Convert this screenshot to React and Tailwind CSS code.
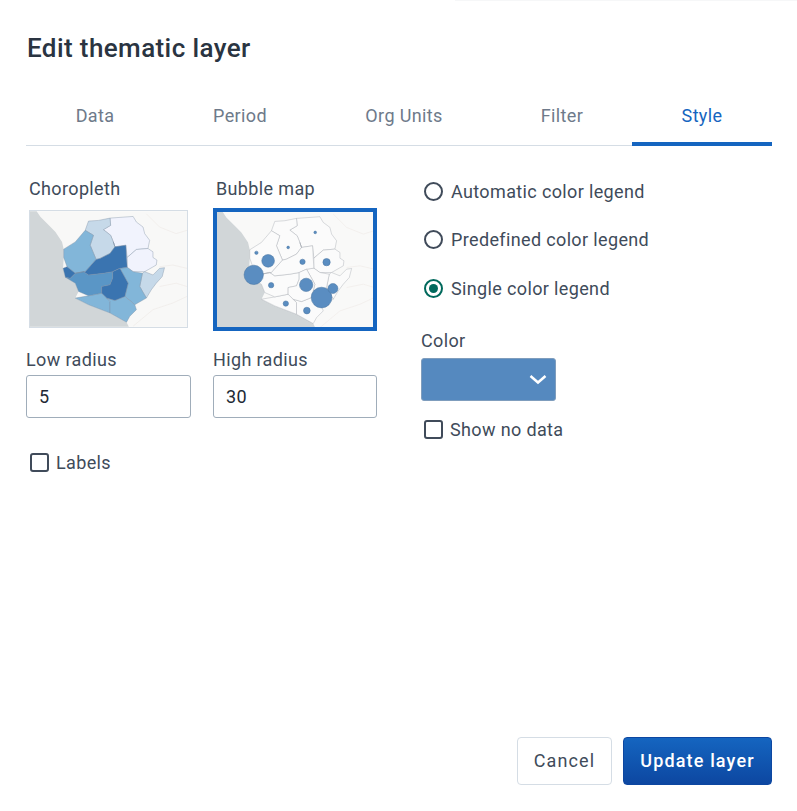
const NE1 = "270,143 340,138 350,155 370,170 375,190 390,210 385,235 350,238 322,262 318,225 285,230 280,215 272,195 250,178 272,165";
const NW1 = "205,152 235,150 270,143 272,165 250,178 272,195 280,215 285,230 270,250 240,265 228,268 210,225 220,195 195,180";
const NE2 = "322,262 350,238 385,235 400,245 400,262 412,270 410,285 375,305 340,305 322,292";
const NW2 = "130,237 165,215 195,180 220,195 210,225 228,268 195,305 165,310 140,290 130,262";
const CENTER = "128,295 140,290 165,310 195,305 228,268 240,265 270,250 285,230 280,215 285,230 318,225 322,292 300,295 278,305 250,310 205,315 190,305 165,310 150,325 135,322";
const SOUTHMID = "135,322 150,325 165,310 190,305 205,315 250,310 278,305 278,325 270,345 245,350 245,370 205,378 175,365 165,340";
const MID = "278,305 300,295 325,340 315,380 285,392 260,385 245,370 245,350 270,345 278,325";
const EAST = "300,295 322,292 340,305 368,310 360,350 380,385 345,405 315,380 325,340";
const EAST2 = "368,310 375,305 400,315 420,295 435,293 428,320 410,340 395,360 380,385 360,350";
const SW = "165,385 205,378 245,370 260,385 270,395 270,430 205,405";
const S = "270,395 260,385 285,392 315,380 345,405 350,420 330,440 320,458 270,430";
const SEA = "28,122 48,122 60,140 85,165 105,185 125,215 130,237 130,262 128,295 135,322 165,340 175,365 165,385 205,405 270,430 320,458 327,472 28,472";

const regions = [
  [NE1, "#f1f3fd"], [NW1, "#c6d9e9"], [NE2, "#f1f3fd"], [NW2, "#82b6d9"], [EAST2, "#c6d9e9"],
  [EAST, "#82b6d9"], [SW, "#82b6d9"], [S, "#82b6d9"], [SOUTHMID, "#5a96c6"], [CENTER, "#3a74b0"], [MID, "#3a74b0"],
];
const bubbles = [
  [147, 314, 29], [190, 272, 19], [155, 248, 5], [250, 232, 4], [331, 187, 4], [293, 275, 8], [365, 276, 11],
  [199, 345, 8], [304, 344, 20], [350, 382, 31], [384, 355, 15], [243, 400, 8], [306, 421, 10],
];
const roads = ["M380 130 L420 170 L470 190 L503 180", "M420 290 L460 285 L503 295", "M340 470 L400 420 L460 400 L503 380", "M420 350 L470 340 L503 350"];

function Choropleth() {
  return (
    <svg viewBox="28 122 475 350" className="block w-[159px] h-[118px] border border-[#d5dde5]">
      <rect x="28" y="122" width="475" height="350" fill="#f8f8f7" />
      {roads.map((d, i) => <path key={i} d={d} fill="none" stroke="#eee9e6" strokeWidth="2" />)}
      <polygon points={SEA} fill="#d1d6d8" />
      {regions.map(([p, c], i) => (
        <polygon key={i} points={p} fill={c} stroke="#7d90a3" strokeWidth="1.2" strokeLinejoin="round" />
      ))}
    </svg>
  );
}

function Bubble() {
  return (
    <svg viewBox="32 124 467 344" className="block w-[156px] h-[115px]">
      <rect x="32" y="124" width="467" height="344" fill="#f9f9f8" />
      {roads.map((d, i) => <path key={i} d={d} fill="none" stroke="#f0ebe8" strokeWidth="2" />)}
      <polygon points={SEA} fill="#d1d6d8" />
      {regions.map(([p], i) => (
        <polygon key={i} points={p} fill="#fbfbfb" stroke="#9aa0a6" strokeWidth="1.1" strokeLinejoin="round" />
      ))}
      <g transform="translate(-5 -2)">
        {bubbles.map(([x, y, r], i) => (
          <circle key={i} cx={x} cy={y} r={r} fill="#5a8dc1" stroke="#47729f" strokeWidth="1.5" />
        ))}
      </g>
    </svg>
  );
}

function Radio({ label, checked }) {
  return (
    <label className="flex items-center h-[24px] pl-[3px]">
      <span className={"w-[19px] h-[19px] rounded-full border-2 flex items-center justify-center shrink-0 " + (checked ? "border-[#00695c]" : "border-[#404b5a]")}>
        {checked && <span className="w-[9px] h-[9px] rounded-full bg-[#00695c]" />}
      </span>
      <span className="ml-[8px] text-[#404b5a]">{label}</span>
    </label>
  );
}

function Check({ label }) {
  return (
    <label className="flex items-center h-[24px]">
      <span className="w-[19px] h-[19px] rounded-[3px] border-2 border-[#404b5a] shrink-0" />
      <span className="ml-[7px] text-[#404b5a]">{label}</span>
    </label>
  );
}

function NumberField({ label, value, width }) {
  return (
    <div className="flex flex-col">
      <div className="h-[24px] leading-[24px] text-[#404b5a] mb-[4px] pt-px">{label}</div>
      <div className={"h-[43px] border border-[#a0adba] rounded-[3px] flex items-center pl-[12px] text-[#212934] " + width}>{value}</div>
    </div>
  );
}

const tabs = [
  ["Data", "w-[138px]"],
  ["Period", "w-[152px]"],
  ["Org Units", "w-[176px]"],
  ["Filter", "w-[140px]"],
  ["Style", "w-[140px]"],
];

export default function App() {
  return (
    <div className="h-[811px] w-[797px] bg-white flex flex-col font-['Roboto',sans-serif] text-[18px] tracking-[0.36px] overflow-hidden">
      <div className="h-px w-[342px] self-end bg-[#f6f7f8]" />
      <div className="flex-1 flex flex-col pl-[26px] pr-[25px]">
        <h1 className="mt-[30px] h-[34px] leading-[34px] text-[26px] font-medium text-[#2a3441] tracking-[0.4px] pl-px">Edit thematic layer</h1>
        <div className="mt-[18px] flex h-[63px] border-b-[1px] border-[#d5dde5]">
          {tabs.map(([t, w]) => (
            <div key={t} className={"shrink-0 flex items-center justify-center h-[63px] " + w + " " + (t === "Style" ? "border-b-[4px] border-[#1565c0] text-[#1565c0] pt-[5px]" : "text-[#6e7a8a] pt-px")}>
              <span>{t}</span>
            </div>
          ))}
        </div>
        <div className="flex mt-[30px]">
          <div className="w-[351px] flex flex-col">
            <div className="flex">
              <div className="w-[187px] pl-[3px] flex flex-col">
                <div className="h-[24px] leading-[24px] text-[#404b5a] mt-[1px]">Choropleth</div>
                <div className="mt-[9px]"><Choropleth /></div>
              </div>
              <div className="flex flex-col">
                <div className="h-[24px] leading-[24px] text-[#404b5a] pl-[3px] mt-[1px]">Bubble map</div>
                <div className="mt-[7px] w-[164px] h-[123px] border-[4px] border-[#1565c0]"><Bubble /></div>
              </div>
            </div>
            <div className="flex gap-[22px] mt-[16px]">
              <NumberField label="Low radius" value="5" width="w-[165px]" />
              <NumberField label="High radius" value="30" width="w-[164px]" />
            </div>
            <div className="mt-[32px] pl-[4px]"><Check label="Labels" /></div>
          </div>
          <div className="ml-[44px] flex flex-col">
            <div className="flex flex-col gap-[24.6px] mt-[3px]">
              <Radio label="Automatic color legend" />
              <Radio label="Predefined color legend" />
              <Radio label="Single color legend" checked />
            </div>
            <div className="h-[24px] leading-[24px] text-[#404b5a] mt-[28.6px]">Color</div>
            <div className="mt-[5px] w-[135px] h-[43px] bg-[#5589bf] border border-[#7f9dbd] rounded-[3px] flex items-center justify-end pr-[8px]">
              <svg width="18" height="18" viewBox="0 0 18 18" fill="none" stroke="white" strokeWidth="2.5">
                <path d="M1.5 6 L9 12.5 L16.5 6" />
              </svg>
            </div>
            <div className="mt-[17px] pl-[3px]"><Check label="Show no data" /></div>
          </div>
        </div>
        <div className="mt-auto mb-[26px] flex justify-end gap-[11px]">
          <div className="w-[95px] h-[48px] rounded-[4px] border border-[#d5dde5] bg-white text-[#404b5a] tracking-[1.1px] flex items-center justify-center pb-[2px]">Cancel</div>
          <div className="w-[149px] h-[48px] rounded-[4px] border border-[#0d47a1] bg-gradient-to-b from-[#1565c0] to-[#0d47a1] text-white font-medium tracking-[1.15px] flex items-center justify-center pb-[2px]">Update layer</div>
        </div>
      </div>
    </div>
  );
}
